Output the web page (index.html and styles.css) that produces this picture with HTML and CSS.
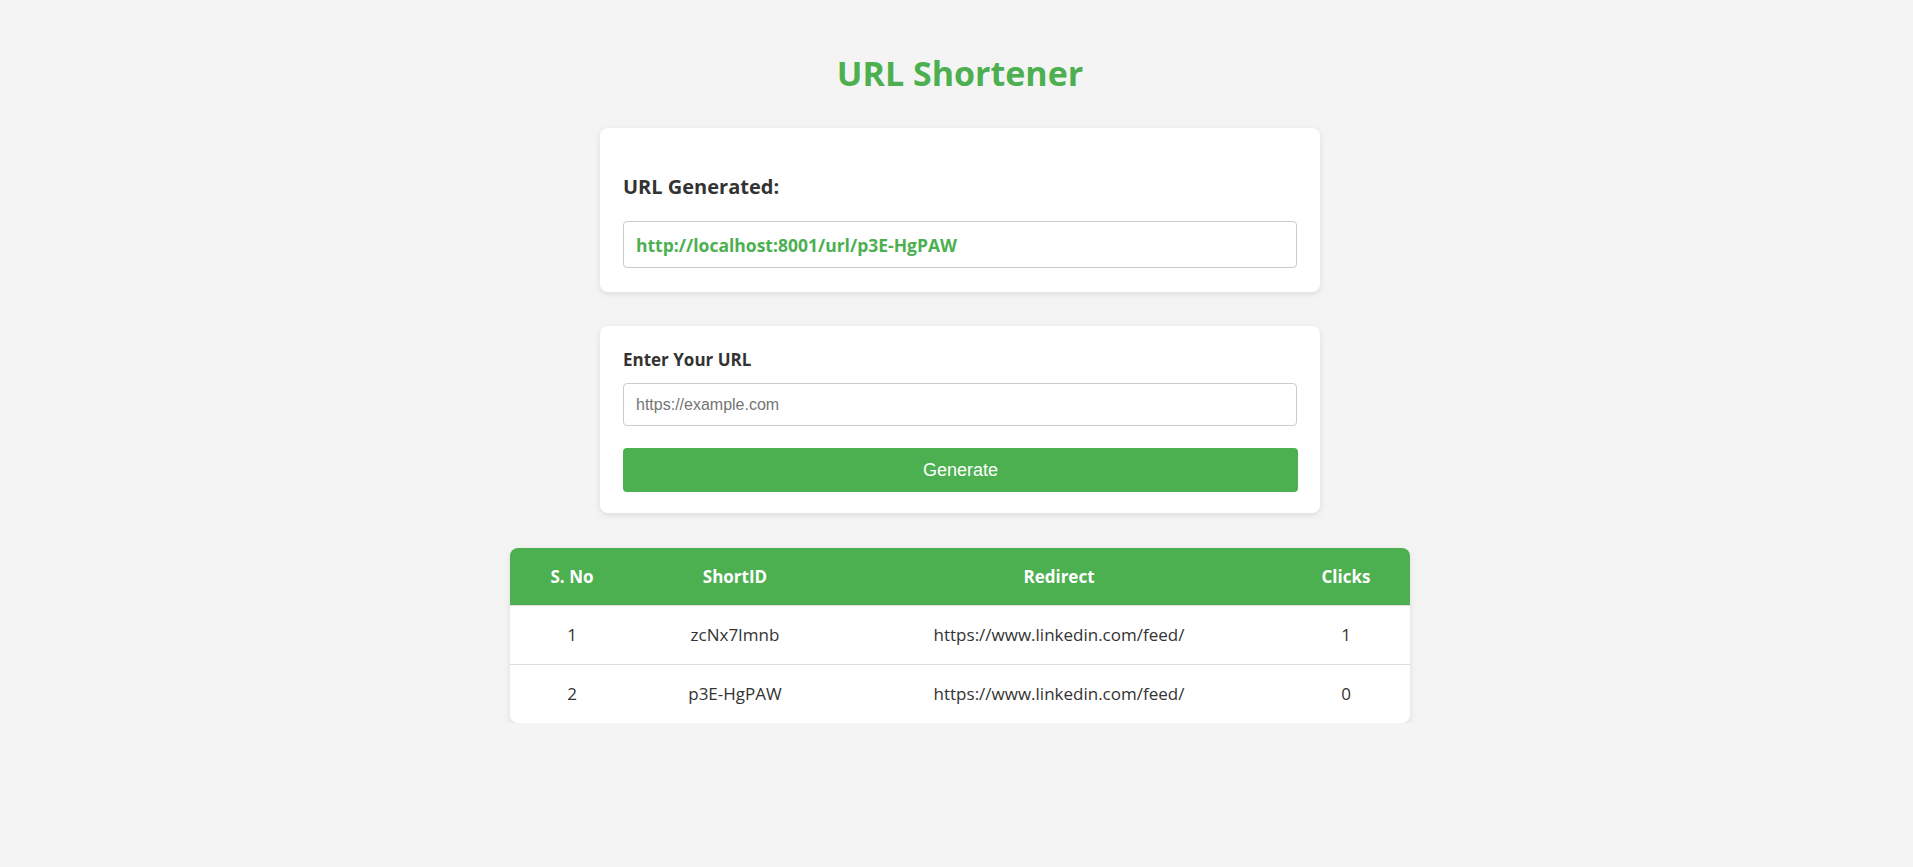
FILE: index.html
```html
<!DOCTYPE html>
<html lang="en">
<head>
<meta charset="utf-8">
<title>URL Shortener</title>
<link rel="stylesheet" href="styles.css">
</head>
<body>
<main class="page">
  <h1 class="title">URL Shortener</h1>

  <section class="card card-result">
    <h3 class="result-label">URL Generated:</h3>
    <div class="result-box">http://localhost:8001/url/p3E-HgPAW</div>
  </section>

  <form class="card card-form">
    <label class="field-label" for="url">Enter Your URL</label>
    <input class="field-input" id="url" type="text" placeholder="https://example.com">
    <button class="btn-generate" type="button">Generate</button>
  </form>

  <div class="table-wrap">
    <table class="url-table">
      <colgroup>
        <col class="c1"><col class="c2"><col class="c3"><col class="c4">
      </colgroup>
      <thead>
        <tr><th>S. No</th><th>ShortID</th><th>Redirect</th><th>Clicks</th></tr>
      </thead>
      <tbody>
        <tr><td>1</td><td>zcNx7Imnb</td><td>https://www.linkedin.com/feed/</td><td>1</td></tr>
        <tr><td>2</td><td>p3E-HgPAW</td><td>https://www.linkedin.com/feed/</td><td>0</td></tr>
      </tbody>
    </table>
  </div>
</main>
</body>
</html>
```

FILE: styles.css
```css
* { box-sizing: border-box; }

html, body {
  margin: 0;
  background: #f4f4f4;
}

body {
  padding: 0 0 0 7px;
  font-family: "Open Sans", "Noto Sans", sans-serif;
  color: #333;
}

.page {
  display: flex;
  flex-direction: column;
  align-items: center;
  padding-top: 53px;
}

.title {
  margin: 0 0 35px;
  font-size: 34px;
  line-height: 40px;
  font-weight: 700;
  color: #4caf50;
}

.card {
  width: 720px;
  background: #fff;
  border-radius: 8px;
  box-shadow: 0 2px 6px rgba(0, 0, 0, 0.1);
  padding: 24px 23px;
}

.card-result {
  padding-bottom: 24px;
}

.result-label {
  margin: 23px 0 22px;
  font-size: 20px;
  line-height: 24px;
  font-weight: 700;
  color: #333;
}

.result-box {
  height: 47px;
  border: 1px solid #ccc;
  border-radius: 4px;
  padding: 0 12px;
  display: flex;
  align-items: center;
  font-size: 17.5px;
  font-weight: 700;
  color: #4caf50;
}

.card-form {
  margin-top: 34px;
  padding-bottom: 21px;
  display: flex;
  flex-direction: column;
}

.field-label {
  font-size: 17px;
  line-height: 20px;
  font-weight: 700;
  color: #333;
  margin-bottom: 13px;
}

.field-input {
  width: 100%;
  height: 43px;
  border: 1px solid #ccc;
  border-radius: 4px;
  padding: 0 12px;
  font-family: "Liberation Sans", Arial, sans-serif;
  font-size: 16px;
  color: #333;
  outline: none;
  margin: 0;
}

.field-input::placeholder {
  color: #757575;
}

.btn-generate {
  margin-top: 22px;
  width: calc(100% + 1px);
  height: 44px;
  border: none;
  border-radius: 4px;
  background: #4caf50;
  color: #fff;
  font-family: "Liberation Sans", Arial, sans-serif;
  font-size: 18px;
  cursor: pointer;
}

.table-wrap {
  margin-top: 35px;
  width: 900px;
  border-radius: 8px;
  overflow: hidden;
  background: #fff;
  box-shadow: 0 2px 6px rgba(0, 0, 0, 0.1);
}

.url-table {
  width: 100%;
  border-collapse: collapse;
  table-layout: fixed;
  font-size: 17px;
}

.c1 { width: 124px; }
.c2 { width: 202px; }
.c3 { width: 446px; }
.c4 { width: 128px; }

.url-table th,
.url-table td {
  text-align: center;
  line-height: 22px;
  padding: 18px 0;
}

.url-table th {
  background: #4caf50;
  color: #fff;
  font-weight: 700;
  padding-bottom: 17px;
  border-bottom: 1px solid #ddd;
}

.url-table td {
  color: #333;
  border-bottom: 1px solid #ddd;
}

.url-table tbody tr:last-child td {
  border-bottom: none;
}
```
